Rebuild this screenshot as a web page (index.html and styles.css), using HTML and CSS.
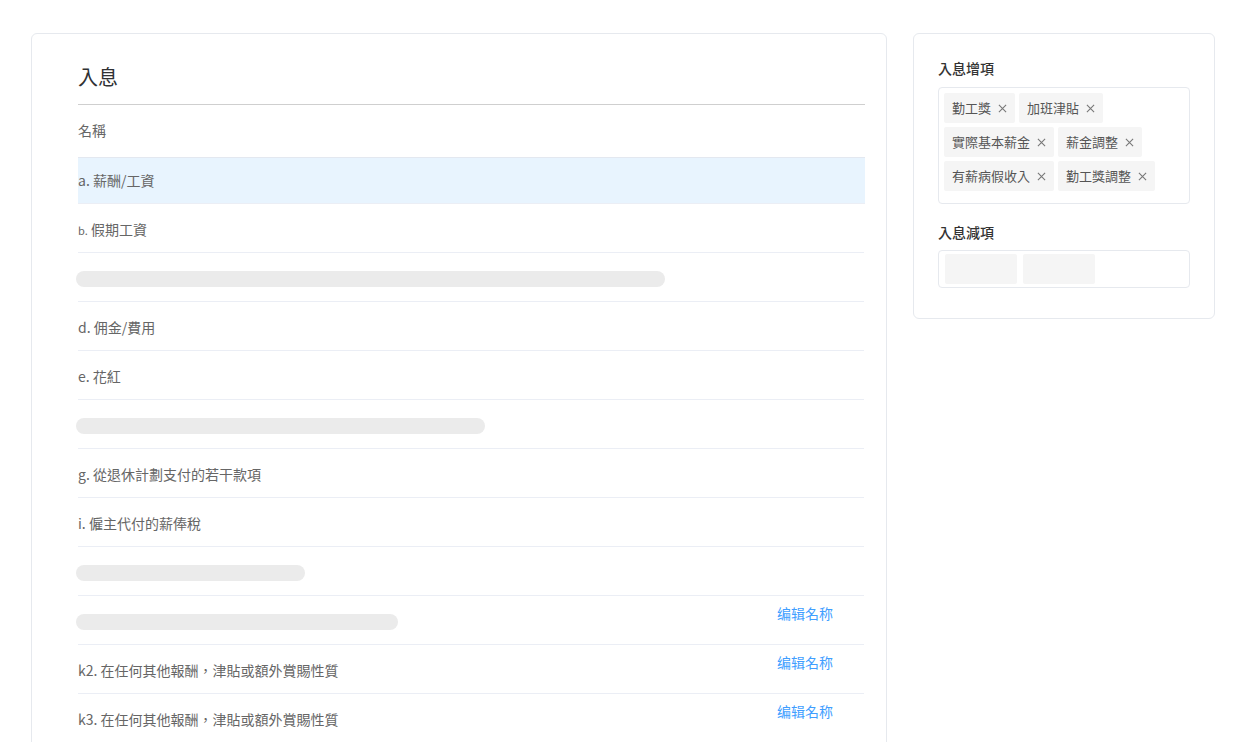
FILE: index.html
```html
<!DOCTYPE html>
<html lang="zh-Hant">
<head>
<meta charset="UTF-8">
<meta name="viewport" content="width=device-width, initial-scale=1.0">
<title>入息</title>
<link rel="stylesheet" href="styles.css">
</head>
<body>

<div class="page">

  <!-- main list -->
  <div class="card main">
    <h2 class="title">入息</h2>
    <div class="head">名稱</div>

    <div class="row active"><span class="name">a. 薪酬/工資</span></div>
    <div class="row"><span class="name"><small>b.</small> 假期工資</span></div>
    <div class="row skel"><i class="bar" style="width:589px"></i></div>
    <div class="row"><span class="name">d. 佣金/費用</span></div>
    <div class="row"><span class="name">e. 花紅</span></div>
    <div class="row skel"><i class="bar" style="width:409px"></i></div>
    <div class="row"><span class="name">g. 從退休計劃支付的若干款項</span></div>
    <div class="row"><span class="name">i. 僱主代付的薪俸稅</span></div>
    <div class="row skel"><i class="bar" style="width:229px"></i></div>
    <div class="row skel"><i class="bar" style="width:322px"></i><a class="edit" href="#">编辑名称</a></div>
    <div class="row"><span class="name">k2. 在任何其他報酬，津貼或額外賞賜性質</span><a class="edit" href="#">编辑名称</a></div>
    <div class="row"><span class="name">k3. 在任何其他報酬，津貼或額外賞賜性質</span><a class="edit" href="#">编辑名称</a></div>
  </div>

  <!-- side groups -->
  <div class="card side">
    <div class="label">入息增項</div>
    <div class="tags">
      <span class="tag">勤工獎<svg class="x" viewBox="0 0 10 10"><path d="M1 1L9 9M9 1L1 9"/></svg></span>
      <span class="tag">加班津貼<svg class="x" viewBox="0 0 10 10"><path d="M1 1L9 9M9 1L1 9"/></svg></span>
      <span class="tag">實際基本薪金<svg class="x" viewBox="0 0 10 10"><path d="M1 1L9 9M9 1L1 9"/></svg></span>
      <span class="tag">薪金調整<svg class="x" viewBox="0 0 10 10"><path d="M1 1L9 9M9 1L1 9"/></svg></span>
      <span class="tag">有薪病假收入<svg class="x" viewBox="0 0 10 10"><path d="M1 1L9 9M9 1L1 9"/></svg></span>
      <span class="tag">勤工獎調整<svg class="x" viewBox="0 0 10 10"><path d="M1 1L9 9M9 1L1 9"/></svg></span>
    </div>

    <div class="label second">入息減項</div>
    <div class="tags empty">
      <span class="tag blank"></span>
      <span class="tag blank"></span>
    </div>
  </div>

</div>

</body>
</html>
```

FILE: styles.css
```css
/* —— RESET —— */
*{box-sizing:border-box;margin:0;padding:0}
html,body{height:100%;background:#fff;overflow:hidden}
body{font-family:"Noto Sans CJK TC","Noto Sans",sans-serif;color:#666;font-size:14px}

/* —— LAYOUT —— */
.page{display:flex;align-items:flex-start;gap:26px;padding:33px 30px 0 31px}
.card{border:1px solid #e6e9ee;border-radius:6px;background:#fff}
.main{flex:1;padding:29px 21px 0 46px;min-height:760px}
.side{width:302px;flex:none;padding:23px 24px 30px}

/* —— MAIN LIST —— */
.title{font-size:20px;font-weight:400;line-height:28px;color:#303133;
  padding-bottom:13px;border-bottom:1px solid #cfcfcf}
.head{padding:14px 0 16px;line-height:22px}

.row{display:flex;justify-content:space-between;align-items:flex-start;
  height:49px;padding-top:14px;line-height:22px;
  border-bottom:1px solid #ebeef5;margin-right:1px}
.row.active{height:47px;padding-top:11px;margin-right:0;
  background:#e8f4fe;border-top:1px solid #e3e8f0}
.name small{font-size:11px}

.row.skel{padding-top:18px}
.bar{display:block;height:16px;border-radius:8px;background:#ebebeb;margin-left:-2px}

.edit{color:#409eff;text-decoration:none;margin:-8px 31px 0 0}
.row.skel .edit{margin-top:-12px}

/* —— SIDE —— */
.label{font-size:14px;font-weight:500;line-height:22px;color:#333;margin-bottom:8px}
.label.second{margin-top:17px;margin-bottom:7px}
.tags{display:flex;flex-wrap:wrap;gap:4px;padding:5px 5px 12px;
  border:1px solid #e6e9ee;border-radius:4px}
.tag{display:inline-flex;align-items:center;height:30px;padding:0 8px 2px;
  background:#f5f5f5;border-radius:2px;font-size:13px;color:#555}
.x{width:9px;height:9px;margin:2px 0 0 7px;fill:none;stroke:#777;stroke-width:1.2}

.tags.empty{padding:3px 6px;gap:6px}
.tag.blank{width:72px;height:30px;padding:0}
```
